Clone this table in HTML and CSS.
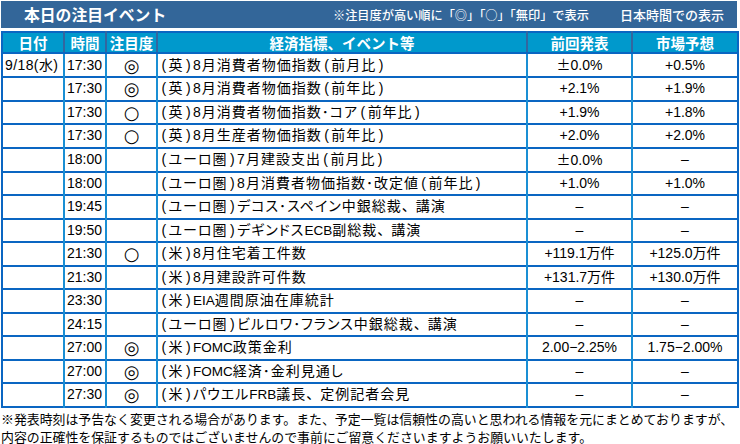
FILE: index.html
```html
<!DOCTYPE html>
<html lang="ja">
<head>
<meta charset="utf-8">
<link rel="stylesheet" href="styles.css">
</head>
<body>
<div class="wrap">
  <div class="titlebar">
    <span class="title">本日の注目イベント</span>
    <span class="note1">※注目度が高い順に「◎」「○」「無印」で表示</span>
    <span class="note2">日本時間での表示</span>
  </div>
  <table class="ev">
    <colgroup>
      <col class="c-date"><col class="c-time"><col class="c-pri"><col class="c-ev"><col class="c-prev"><col class="c-fc">
    </colgroup>
    <thead>
      <tr><th>日付</th><th>時間</th><th>注目度</th><th>経済指標、イベント等</th><th>前回発表</th><th>市場予想</th></tr>
    </thead>
    <tbody>
      <tr><td class="d">9/18(水)</td><td class="t">17:30</td><td class="p">◎</td><td class="e"><i class="pa">(</i>英<i class="pa">)</i>8月消費者物価指数<i class="pa">(</i>前月比<i class="pa">)</i></td><td class="v"><span class="pm">±</span>0.0%</td><td class="v">+0.5%</td></tr>
      <tr><td class="d"></td><td class="t">17:30</td><td class="p">◎</td><td class="e"><i class="pa">(</i>英<i class="pa">)</i>8月消費者物価指数<i class="pa">(</i>前年比<i class="pa">)</i></td><td class="v">+2.1%</td><td class="v">+1.9%</td></tr>
      <tr><td class="d"></td><td class="t">17:30</td><td class="p">○</td><td class="e"><i class="pa">(</i>英<i class="pa">)</i>8月消費者物価指数･コア<i class="pa">(</i>前年比<i class="pa">)</i></td><td class="v">+1.9%</td><td class="v">+1.8%</td></tr>
      <tr><td class="d"></td><td class="t">17:30</td><td class="p">○</td><td class="e"><i class="pa">(</i>英<i class="pa">)</i>8月生産者物価指数<i class="pa">(</i>前年比<i class="pa">)</i></td><td class="v">+2.0%</td><td class="v">+2.0%</td></tr>
      <tr><td class="d"></td><td class="t">18:00</td><td class="p"></td><td class="e"><i class="pa">(</i>ユーロ圏<i class="pa">)</i>7月建設支出<i class="pa">(</i>前月比<i class="pa">)</i></td><td class="v"><span class="pm">±</span>0.0%</td><td class="v">–</td></tr>
      <tr><td class="d"></td><td class="t">18:00</td><td class="p"></td><td class="e"><i class="pa">(</i>ユーロ圏<i class="pa">)</i>8月消費者物価指数･改定値<i class="pa">(</i>前年比<i class="pa">)</i></td><td class="v">+1.0%</td><td class="v">+1.0%</td></tr>
      <tr><td class="d"></td><td class="t">19:45</td><td class="p"></td><td class="e"><i class="pa">(</i>ユーロ圏<i class="pa">)</i>デコス･スペイン中銀総裁<span class="cm">、</span>講演</td><td class="v">–</td><td class="v">–</td></tr>
      <tr><td class="d"></td><td class="t">19:50</td><td class="p"></td><td class="e"><i class="pa">(</i>ユーロ圏<i class="pa">)</i>デギンドス<span class="l">ECB</span>副総裁<span class="cm">、</span>講演</td><td class="v">–</td><td class="v">–</td></tr>
      <tr><td class="d"></td><td class="t">21:30</td><td class="p">○</td><td class="e"><i class="pa">(</i>米<i class="pa">)</i>8月住宅着工件数</td><td class="v">+119.1万件</td><td class="v">+125.0万件</td></tr>
      <tr><td class="d"></td><td class="t">21:30</td><td class="p"></td><td class="e"><i class="pa">(</i>米<i class="pa">)</i>8月建設許可件数</td><td class="v">+131.7万件</td><td class="v">+130.0万件</td></tr>
      <tr><td class="d"></td><td class="t">23:30</td><td class="p"></td><td class="e"><i class="pa">(</i>米<i class="pa">)</i><span class="l">EIA</span>週間原油在庫統計</td><td class="v">–</td><td class="v">–</td></tr>
      <tr><td class="d"></td><td class="t">24:15</td><td class="p"></td><td class="e"><i class="pa">(</i>ユーロ圏<i class="pa">)</i>ビルロワ･フランス中銀総裁<span class="cm">、</span>講演</td><td class="v">–</td><td class="v">–</td></tr>
      <tr><td class="d"></td><td class="t">27:00</td><td class="p">◎</td><td class="e"><i class="pa">(</i>米<i class="pa">)</i><span class="l">FOMC</span>政策金利</td><td class="v">2.00−2.25%</td><td class="v">1.75−2.00%</td></tr>
      <tr><td class="d"></td><td class="t">27:00</td><td class="p">◎</td><td class="e"><i class="pa">(</i>米<i class="pa">)</i><span class="l">FOMC</span>経済･金利見通し</td><td class="v">–</td><td class="v">–</td></tr>
      <tr><td class="d"></td><td class="t">27:30</td><td class="p">◎</td><td class="e"><i class="pa">(</i>米<i class="pa">)</i>パウエル<span class="l">FRB</span>議長<span class="cm">、</span>定例記者会見</td><td class="v">–</td><td class="v">–</td></tr>
    </tbody>
  </table>
  <p class="foot">※発表時刻は予告なく変更される場合があります。また、予定一覧は信頼性の高いと思われる情報を元にまとめておりますが、<br>内容の正確性を保証するものではございませんので事前にご留意くださいますようお願いいたします。</p>
</div>
</body>
</html>
```

FILE: styles.css
```css
html, body {
  margin: 0;
  padding: 0;
  background: #ffffff;
}
body {
  font-family: "Liberation Sans", "Noto Sans CJK JP", sans-serif;
  color: #000;
}
.wrap {
  width: 736px;
  padding: 1px 0 0 1px;
}
.titlebar {
  display: flex;
  align-items: center;
  height: 27px;
  background: #336699;
  color: #fff;
  box-sizing: border-box;
  padding-left: 23px;
}
.title {
  font-family: "Noto Sans CJK JP", sans-serif;
  font-weight: bold;
  font-size: 15.8px;
  width: 309px;
}
.note1 {
  font-family: "Noto Sans CJK JP", sans-serif;
  font-size: 12.2px;
  font-weight: 500;
  width: 287px;
}
.note2 {
  font-family: "Noto Sans CJK JP", sans-serif;
  font-size: 13px;
  font-weight: 500;
}
.ev {
  margin-top: 3px;
  width: 736px;
  border-collapse: collapse;
  table-layout: fixed;
  border: 2px solid #0a66c2;
}
.c-date { width: 62px; }
.c-time { width: 42px; }
.c-pri { width: 51px; }
.c-ev { width: 370px; }
.c-prev { width: 105px; }
.c-fc { width: 106px; }
.ev th {
  background: #0099cc;
  color: #fff;
  font-family: "Noto Sans CJK JP", sans-serif;
  font-weight: bold;
  font-size: 14.5px;
  height: 19px;
  padding: 0;
  line-height: 19px;
  border-left: 2px solid #33669f;
  border-bottom: 2px solid #0a66c2;
  text-align: center;
}
.ev th:first-child { border-left: none; }
.ev td {
  height: 21.5px;
  padding: 0;
  font-size: 14px;
  line-height: 21px;
  white-space: nowrap;
  border-top: 2px solid #0a66c2;
  border-left: 2px solid #1a8fd4;
}
.ev td:first-child { border-left: none; }
.ev tbody tr:first-child td { border-top: none; }
.ev td.d { padding-left: 2px; letter-spacing: 0.4px; }
.ev td.t { padding-left: 2px; }
.ev td.p {
  text-align: center;
  font-family: "DejaVu Sans", sans-serif;
  font-size: 18px;
  line-height: 21px;
}
.ev td.e {
  padding-left: 1px;
  letter-spacing: 1px;
  font-feature-settings: "palt";
}
.ev td.v { text-align: center; }
.pa {
  font-style: normal;
  display: inline-block;
  width: 9.5px;
  letter-spacing: 0;
  text-align: center;
}
.cm {
  font-feature-settings: normal;
  letter-spacing: 0;
}
.l {
  letter-spacing: 0;
  font-size: 13.5px;
}
.pm {
  font-family: "Noto Sans CJK JP", sans-serif;
}
.foot {
  margin: 2px 0 0 0;
  font-family: "Noto Sans CJK JP", sans-serif;
  font-size: 12.9px;
  line-height: 18px;
}
```
